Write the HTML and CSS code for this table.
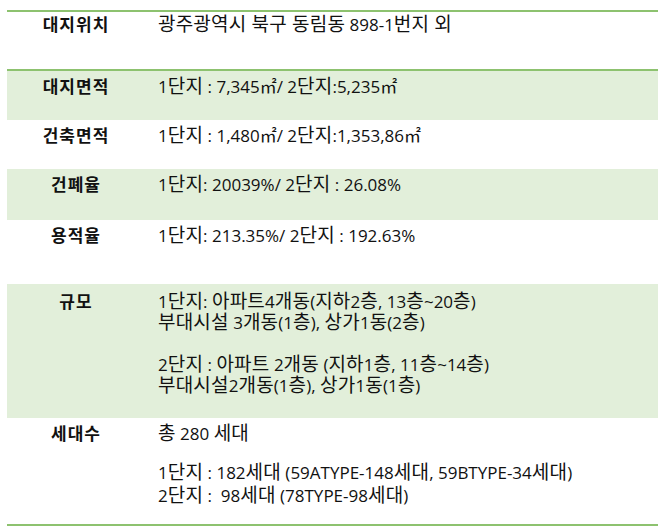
FILE: index.html
```html
<!DOCTYPE html>
<html lang="ko">
<head>
<meta charset="utf-8">
<link rel="stylesheet" href="styles.css">
</head>
<body>
<div class="sheet">
  <div class="row r1 head">
    <div class="label">대지위치</div>
    <div class="value"><p><span class="ko">광주광역시 북구 동림동</span> 898-1<span class="ko">번지 외</span></p></div>
  </div>
  <div class="row r2 band">
    <div class="label">대지면적</div>
    <div class="value"><p>1<span class="ko">단지</span> : 7,345㎡/ 2<span class="ko">단지</span>:5,235㎡</p></div>
  </div>
  <div class="row r3">
    <div class="label">건축면적</div>
    <div class="value"><p>1<span class="ko">단지</span> : 1,480㎡/ 2<span class="ko">단지</span>:1,353,86㎡</p></div>
  </div>
  <div class="row r4 band">
    <div class="label">건폐율</div>
    <div class="value"><p>1<span class="ko">단지</span>: 20039%/ 2<span class="ko">단지</span> : 26.08%</p></div>
  </div>
  <div class="row r5">
    <div class="label">용적율</div>
    <div class="value"><p>1<span class="ko">단지</span>: 213.35%/ 2<span class="ko">단지</span> : 192.63%</p></div>
  </div>
  <div class="row r6 band">
    <div class="label">규모</div>
    <div class="value">
      <p>1<span class="ko">단지</span>: <span class="ko">아파트</span>4<span class="ko">개동</span>(<span class="ko">지하</span>2<span class="ko">층</span>, 13<span class="ko">층</span>~20<span class="ko">층</span>)<br><span class="ko">부대시설</span> 3<span class="ko">개동</span>(1<span class="ko">층</span>), <span class="ko">상가</span>1<span class="ko">동</span>(2<span class="ko">층</span>)</p>
      <p>2<span class="ko">단지</span> : <span class="ko">아파트</span> 2<span class="ko">개동</span> (<span class="ko">지하</span>1<span class="ko">층</span>, 11<span class="ko">층</span>~14<span class="ko">층</span>)<br><span class="ko">부대시설</span>2<span class="ko">개동</span>(1<span class="ko">층</span>), <span class="ko">상가</span>1<span class="ko">동</span>(1<span class="ko">층</span>)</p>
    </div>
  </div>
  <div class="row r7 last">
    <div class="label">세대수</div>
    <div class="value">
      <p><span class="ko">총</span> 280 <span class="ko">세대</span></p>
      <p>1<span class="ko">단지</span> : 182<span class="ko">세대</span> (59ATYPE-148<span class="ko">세대</span>, 59BTYPE-34<span class="ko">세대</span>)<br>2<span class="ko">단지</span> :&nbsp; 98<span class="ko">세대</span> (78TYPE-98<span class="ko">세대</span>)</p>
    </div>
  </div>
</div>
</body>
</html>
```
FILE: styles.css
```css
html, body {
  margin: 0;
  padding: 0;
  background: #ffffff;
}
body {
  font-family: "Open Sans", "Noto Sans CJK KR", sans-serif;
  color: #111111;
  font-size: 17px;
}
.sheet {
  margin: 10px 0 0 7px;
  width: 651px;
  border-top: 2px solid #8dc26f;
  border-bottom: 2px solid #8dc26f;
}
.row {
  display: grid;
  grid-template-columns: 138px 1fr;
  box-sizing: border-box;
}
.row.head {
  border-bottom: 2px solid #8dc26f;
}
.band {
  background: #e2efda;
}
.label {
  text-align: center;
  font-weight: 700;
  font-size: 17px;
  letter-spacing: 1px;
  line-height: 21px;
  padding-top: 5px;
}
.value {
  padding: 5px 0 0 13px;
  line-height: 21px;
}
.ko {
  font-size: 19px;
  letter-spacing: 0.2px;
}
.value p {
  margin: 0 0 21px 0;
}
.value p:last-child {
  margin-bottom: 0;
}
.r1 .label,
.r1 .value {
  padding-top: 2px;
}
.r6 .label,
.r6 .value {
  padding-top: 7px;
}
.r1 { height: 59px; }
.r2 { height: 49px; }
.r3 { height: 49px; }
.r4 { height: 51px; }
.r5 { height: 64px; }
.r6 { height: 134px; }
.r7 { height: 106px; }
.r7 .value p:first-child {
  margin-bottom: 17px;
}
.r7 .value p + p {
  line-height: 22px;
}
```
